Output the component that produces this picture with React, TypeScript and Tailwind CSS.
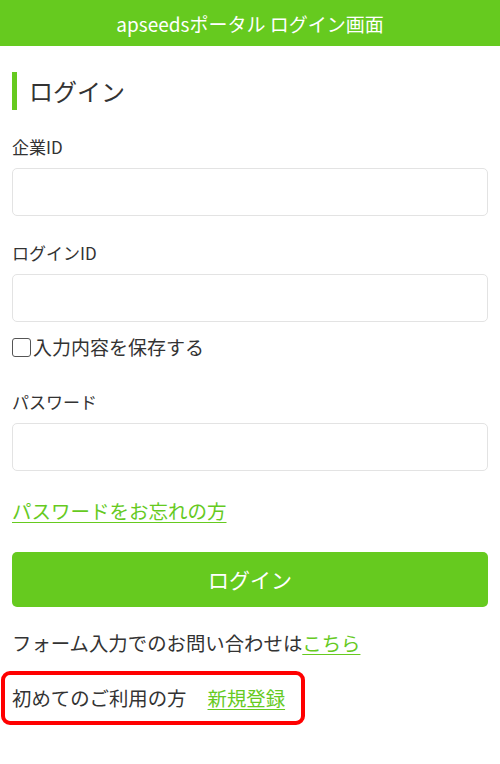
import { useState } from "react";

const font = { fontFamily: '"Noto Sans CJK JP", "Noto Sans", sans-serif' };

function Field({ label, type = "text" }: { label: string; type?: string }) {
  return (
    <div className="flex flex-col">
      <label className="text-[17px] leading-[26px] text-[#333]">{label}</label>
      <input
        type={type}
        className="mt-[8px] h-[48px] w-full rounded-[5px] border border-[#e3e3e3] bg-white px-3 text-[17px] outline-none"
      />
    </div>
  );
}

export default function App() {
  const [save, setSave] = useState(false);

  return (
    <div className="min-h-[764px] w-[500px] bg-white text-[#333]" style={font}>
      {/* Header */}
      <header className="flex h-[46px] items-center justify-center bg-[#66ca1f]">
        <h1 className="text-[19px] leading-none text-white">apseedsポータル ログイン画面</h1>
      </header>

      <main className="px-3">
        {/* Title */}
        <div className="mt-[26px] flex h-[38px] items-center border-l-[5px] border-[#66ca1f] pl-[12px]">
          <h2 className="text-[24px] leading-none text-[#333]">ログイン</h2>
        </div>

        <div className="mt-[24px]">
          <Field label="企業ID" />
        </div>

        <div className="mt-[24px]">
          <Field label="ログインID" />
        </div>

        <label className="mt-[12px] flex h-[26px] cursor-pointer items-center text-[19px] leading-[26px]">
          <input
            type="checkbox"
            checked={save}
            onChange={(e) => setSave(e.target.checked)}
            className="sr-only"
          />
          <span className="mr-[2px] flex h-[19px] w-[19px] items-center justify-center rounded-[3px] border border-[#555] bg-white text-[13px] leading-none">
            {save ? "✓" : ""}
          </span>
          入力内容を保存する
        </label>

        <div className="mt-[29px]">
          <Field label="パスワード" type="password" />
        </div>

        <div className="mt-[26px] h-[28px]">
          <a href="#" className="text-[19.5px] leading-[28px] text-[#66ca1f] underline underline-offset-[3px]">
            パスワードをお忘れの方
          </a>
        </div>

        <button
          type="button"
          className="mt-[27px] flex h-[55px] w-full items-center justify-center rounded-[5px] bg-[#66ca1f] text-[21px] text-white"
        >
          ログイン
        </button>

        <p className="mt-[22px] h-[28px] text-[19.4px] leading-[28px]">
          フォーム入力でのお問い合わせは
          <a href="#" className="text-[#66ca1f] underline underline-offset-[3px]">
            こちら
          </a>
        </p>
      </main>

      {/* Highlighted register row */}
      <div className="ml-[1px] mt-[14px] flex h-[54px] w-[304px] items-center rounded-[9px] border-[4px] border-[#ff0000] pl-[7px]">
        <span className="text-[19.4px] leading-[28px]">初めてのご利用の方</span>
        <a
          href="#"
          className="ml-[21px] text-[19.4px] leading-[28px] text-[#66ca1f] underline underline-offset-[3px]"
        >
          新規登録
        </a>
      </div>
    </div>
  );
}
